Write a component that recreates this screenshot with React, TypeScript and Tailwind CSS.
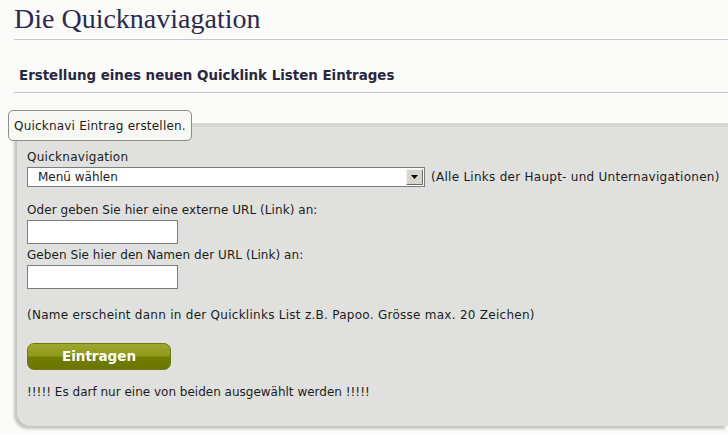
import React from "react";

export default function App() {
  const sans = { fontFamily: '"DejaVu Sans", Verdana, sans-serif' };
  return (
    <div className="w-[728px] h-[435px] overflow-hidden bg-[#fbfbfa] text-[#1b1b1b]" style={sans}>
      <div className="ml-[14px] border-b border-[#c3c3da] h-[40px] pt-[4px]">
        <h1 className="text-[28px] leading-[30px] text-[#2b2b50] font-normal" style={{ fontFamily: '"Liberation Serif", "Times New Roman", serif' }}>
          Die Quicknaviagation
        </h1>
      </div>
      <div className="ml-[14px] border-b border-[#c3c3da] h-[53px] pt-[27px] pl-[5px]">
        <h2 className="text-[13.4px] leading-[17px] font-bold text-[#272740]">Erstellung eines neuen Quicklink Listen Eintrages</h2>
      </div>
      <div className="mt-[17px] relative z-10 ml-[8px] w-[184px] h-[31px] rounded-[5px] border border-[#8c8c8c] bg-[#f7f7f3] flex items-center pl-[5px] text-[12px] tracking-[0.2px]">
        Quicknavi Eintrag erstellen.
      </div>
      <div className="ml-[17px] mt-[-18px] h-[303px] bg-[#e0e1df] rounded-bl-[14px] shadow-[-3px_3px_3px_rgba(0,0,0,0.22)] border-t-[4px] border-[#d5d6d3] pl-[10px] pt-[20px] text-[12px]">
        <div className="leading-[20px] tracking-[0.27px]">Quicknavigation</div>
        <div className="flex items-center">
          <div className="w-[398px] h-[20px] bg-white border border-[#7d7d7d] flex items-center justify-between">
            <span className="pl-[10px] leading-[18px]">Menü wählen</span>
            <div className="w-[17px] h-[16px] mr-[1px] bg-[#d8d5ce] border border-t-[#f4f4f4] border-l-[#f4f4f4] border-r-[#6a6a6a] border-b-[#6a6a6a] flex items-center justify-center">
              <svg width="7" height="4" viewBox="0 0 7 4"><path d="M0 0H7L3.5 4Z" fill="#000" /></svg>
            </div>
          </div>
          <span className="ml-[6px] tracking-[0.27px]">(Alle Links der Haupt- und Unternavigationen)</span>
        </div>
        <div className="mt-[13px] leading-[20px] tracking-[0.06px]">Oder geben Sie hier eine externe URL (Link) an:</div>
        <div className="w-[151px] h-[24px] bg-white border border-[#7d7d7d]" />
        <div className="mt-[1px] leading-[20px] tracking-[0.06px]">Geben Sie hier den Namen der URL (Link) an:</div>
        <div className="w-[151px] h-[24px] bg-white border border-[#7d7d7d]" />
        <div className="mt-[16px] leading-[20px] tracking-[0.27px]">(Name erscheint dann in der Quicklinks List z.B. Papoo. Grösse max. 20 Zeichen)</div>
        <button className="mt-[18px] w-[144px] h-[27px] rounded-[7px] border border-[#6f7a08] bg-[linear-gradient(#9ea72e_0%,#8e9919_48%,#727e00_52%,#6a7500_100%)] text-white font-bold text-[13.5px] tracking-normal flex items-center justify-center">
          Eintragen
        </button>
        <div className="mt-[12px] leading-[20px]">!!!!! Es darf nur eine von beiden ausgewählt werden !!!!!</div>
      </div>
    </div>
  );
}
